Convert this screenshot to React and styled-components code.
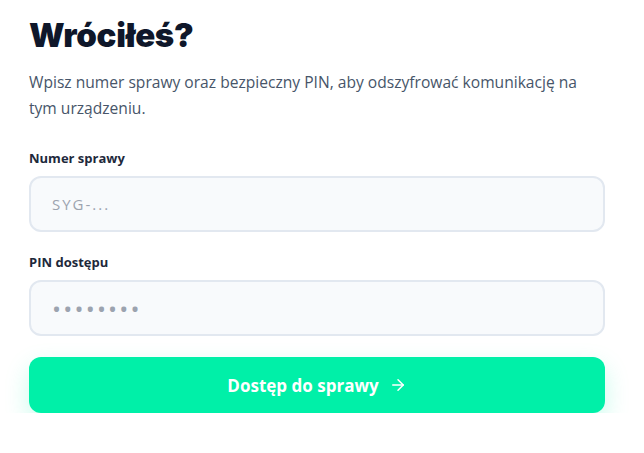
import React from "react";
import styled, { createGlobalStyle } from "styled-components";

const GlobalStyle = createGlobalStyle`
  html, body {
    margin: 0;
    padding: 0;
    background: #ffffff;
  }
  body {
    font-family: "Open Sans", "Noto Sans", sans-serif;
  }
`;

const Page = styled.div`
  padding: 13px 0 0 29px;
  width: 576px;
`;

const Title = styled.h1`
  margin: 0;
  font-family: Inter, "Noto Sans", sans-serif;
  font-weight: 900;
  font-size: 33px;
  line-height: 44px;
  letter-spacing: -0.3px;
  color: #0f172a;
`;

const Lead = styled.p`
  margin: 12px 0 0;
  font-size: 15.6px;
  line-height: 26px;
  color: #475569;
`;

const Form = styled.form`
  display: flex;
  flex-direction: column;
  margin-top: 28px;
`;

const Field = styled.div`
  display: flex;
  flex-direction: column;
  gap: 9px;
  margin-bottom: 21px;
`;

const Label = styled.label`
  font-size: 13px;
  font-weight: 700;
  color: #1e293b;
  line-height: 18px;
`;

const Input = styled.input`
  box-sizing: border-box;
  height: 56px;
  width: 100%;
  padding: 0 21px;
  border: 2px solid #e2e8f0;
  border-radius: 12px;
  background: #f8fafc;
  font-family: "Open Sans", sans-serif;
  font-size: ${(p) => (p.$dots ? "24px" : "15px")};
  color: #0f172a;
  outline: none;
  letter-spacing: ${(p) => (p.$dots ? "2.2px" : "2px")};
  &::placeholder {
    color: #9ca3af;
  }
`;

const Button = styled.button`
  display: flex;
  align-items: center;
  justify-content: center;
  gap: 10px;
  height: 56px;
  width: 100%;
  border: none;
  border-radius: 12px;
  background: #00f0a8;
  color: #ffffff;
  font-family: "Open Sans", sans-serif;
  font-weight: 700;
  font-size: 17px;
  box-shadow: 0 10px 24px rgba(0, 240, 168, 0.22);
  cursor: pointer;
  svg {
    width: 18px;
    height: 18px;
  }
`;

export default function App() {
  return (
    <Page>
      <GlobalStyle />
      <Title>Wróciłeś?</Title>
      <Lead>
        Wpisz numer sprawy oraz bezpieczny PIN, aby odszyfrować komunikację na
        tym urządzeniu.
      </Lead>
      <Form onSubmit={(e) => e.preventDefault()}>
        <Field>
          <Label htmlFor="case">Numer sprawy</Label>
          <Input id="case" placeholder="SYG-..." />
        </Field>
        <Field>
          <Label htmlFor="pin">PIN dostępu</Label>
          <Input id="pin" type="password" $dots placeholder="••••••••" />
        </Field>
        <Button type="submit">
          Dostęp do sprawy
          <svg viewBox="0 0 24 24" fill="none" stroke="currentColor" strokeWidth="2" strokeLinecap="round" strokeLinejoin="round">
            <path d="M5 12h14" />
            <path d="m12 5 7 7-7 7" />
          </svg>
        </Button>
      </Form>
    </Page>
  );
}
